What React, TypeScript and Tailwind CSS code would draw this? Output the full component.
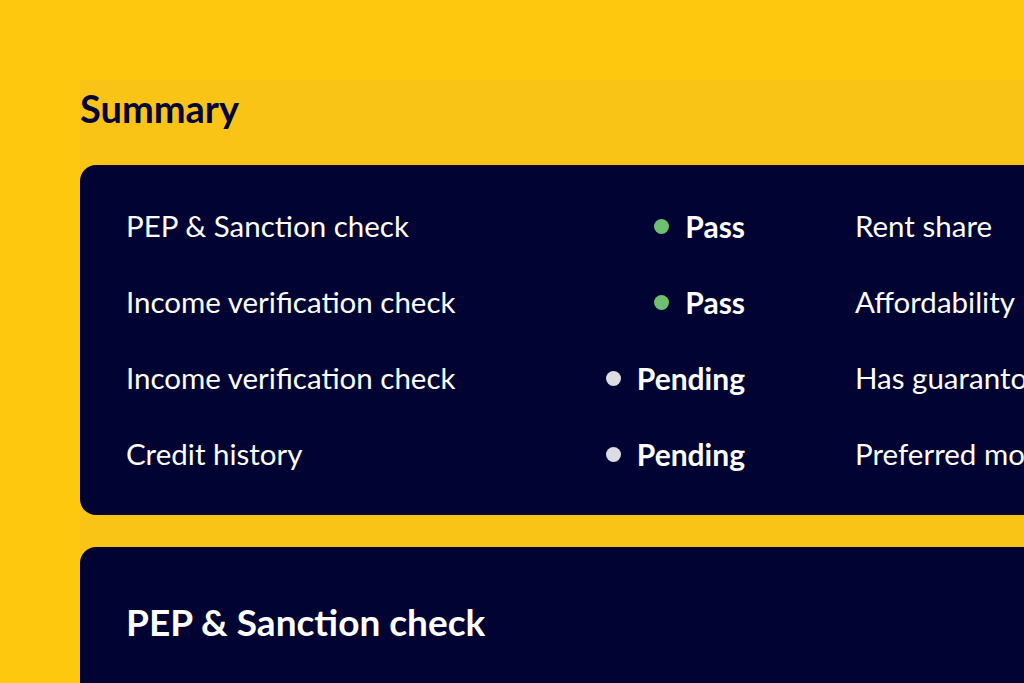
import React from "react";

type Status = "pass" | "pending";

interface Row {
  label: string;
  status: Status;
  right: string;
}

const rows: Row[] = [
  { label: "PEP & Sanction check", status: "pass", right: "Rent share" },
  { label: "Income verification check", status: "pass", right: "Affordability" },
  { label: "Income verification check", status: "pending", right: "Has guarantor" },
  { label: "Credit history", status: "pending", right: "Preferred move-in date" },
];

const StatusBadge = ({ status }: { status: Status }) => (
  <div className="flex items-center justify-end gap-[16px]">
    <span
      className={
        status === "pass"
          ? "w-[15px] h-[15px] rounded-full bg-[#6cc070]"
          : "w-[15px] h-[15px] rounded-full bg-[#dcdce2]"
      }
    />
    <span className="font-bold text-[30px]">{status === "pass" ? "Pass" : "Pending"}</span>
  </div>
);

export default function App() {
  return (
    <div
      className="w-[1024px] h-[683px] overflow-hidden bg-[#fec80f] pt-[80px] pl-[80px]"
      style={{ fontFamily: "Lato, 'Open Sans', sans-serif" }}
    >
      <div className="bg-[#f9c416] h-full flex flex-col">
        <h1 className="text-[38px] leading-[56px] h-[56px] mb-[29px] font-bold text-[#020535]">
          Summary
        </h1>

        <div className="bg-[#010333] rounded-l-[16px] pl-[46px] pt-[23px] pb-[23px] text-white text-[29.5px] whitespace-nowrap overflow-hidden">
          {rows.map((r, i) => (
            <div key={i} className="flex items-center h-[76px]">
              <div className="w-[440px] shrink-0">{r.label}</div>
              <div className="w-[179px] shrink-0">
                <StatusBadge status={r.status} />
              </div>
              <div className="ml-[110px] shrink-0">{r.right}</div>
            </div>
          ))}
        </div>

        <div className="mt-[32px] bg-[#010333] rounded-tl-[16px] flex-1 pl-[46px] pt-[52px] text-white">
          <h2 className="text-[37px] leading-[46px] font-bold">PEP &amp; Sanction check</h2>
        </div>
      </div>
    </div>
  );
}
